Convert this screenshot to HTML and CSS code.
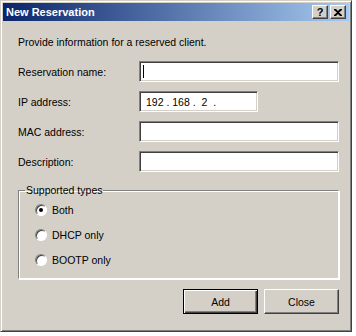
FILE: index.html
```html
<!DOCTYPE html>
<html lang="en">
<head>
    <meta charset="UTF-8">
    <title>New Reservation</title>
    <link rel="stylesheet" href="styles.css">
</head>
<body>
    <div class="window">
        <div class="titlebar">
            <span class="title">New Reservation</span>
            <div class="title-buttons">
                <span class="tbtn">?</span>
                <span class="tbtn">
                    <svg width="8" height="7" viewBox="0 0 8 7"><path d="M0 0h2l2 2 2-2h2v1L5 3.5 8 6v1H6L4 5 2 7H0V6l3-2.5L0 1z" fill="#000"/></svg>
                </span>
            </div>
        </div>
        <div class="content">
            <p class="intro">Provide information for a reserved client.</p>
            <div class="row">
                <label>Reservation name:</label>
                <div class="field wide"><span class="caret"></span></div>
            </div>
            <div class="row">
                <label>IP address:</label>
                <div class="field ip">192 . 168 .&nbsp;&nbsp;2&nbsp;&nbsp;.</div>
            </div>
            <div class="row">
                <label>MAC address:</label>
                <div class="field wide"></div>
            </div>
            <div class="row">
                <label>Description:</label>
                <div class="field wide"></div>
            </div>

            <fieldset class="group">
                <legend>Supported types</legend>
                <div class="radio"><span class="dot checked"></span>Both</div>
                <div class="radio"><span class="dot"></span>DHCP only</div>
                <div class="radio"><span class="dot"></span>BOOTP only</div>
            </fieldset>

            <div class="actions">
                <button class="btn default">Add</button>
                <button class="btn">Close</button>
            </div>
        </div>
    </div>
</body>
</html>
```

FILE: styles.css
```css
body {
    margin: 0;
    background: #ffffff;
    font-family: Tahoma, "Liberation Sans", Arial, sans-serif;
    font-size: 10.5px;
    color: #000;
}
.window {
    width: 352px;
    height: 332px;
    box-sizing: border-box;
    background: #d4d0c8;
    border: 1px solid;
    border-color: #d4d0c8 #404040 #404040 #d4d0c8;
    box-shadow: inset 1px 1px #ffffff, inset -1px -1px #808080;
    padding: 2px;
}
.titlebar {
    height: 18px;
    background: linear-gradient(to right, #0a246a, #a6caf0);
    display: flex;
    align-items: center;
    justify-content: space-between;
    padding: 0 3px 0 3px;
}
.title {
    color: #fff;
    font-weight: bold;
    font-size: 11px;
}
.title-buttons {
    display: flex;
    gap: 2px;
}
.tbtn {
    width: 16px;
    height: 14px;
    box-sizing: border-box;
    background: #d4d0c8;
    border: 1px solid;
    border-color: #fff #404040 #404040 #fff;
    box-shadow: inset -1px -1px #808080;
    display: flex;
    align-items: center;
    justify-content: center;
    font-weight: bold;
    font-size: 11px;
    line-height: 1;
}
.content {
    padding: 15px 8px 0 15px;
}
.intro {
    margin: 0 0 12px 0;
    line-height: 13px;
}
.row {
    display: flex;
    align-items: center;
    height: 21px;
    margin-bottom: 9px;
}
.row label {
    width: 121px;
    flex-shrink: 0;
}
.field {
    height: 21px;
    flex-shrink: 0;
    box-sizing: border-box;
    background: #fff;
    border: 1px solid;
    border-color: #808080 #fff #fff #808080;
    box-shadow: inset 1px 1px #404040, inset -1px -1px #d4d0c8;
    display: flex;
    align-items: center;
    padding-left: 4px;
}
.wide {
    width: 200px;
}
.ip {
    width: 119px;
    padding-left: 6px;
}
.caret {
    width: 1px;
    height: 13px;
    background: #000;
    margin-left: -1px;
}
.group {
    margin: 12px 0 0 0;
    width: 321px;
    height: 95px;
    box-sizing: border-box;
    border: 1px solid;
    border-color: #808080 #fff #fff #808080;
    box-shadow: inset 1px 1px #fff, 1px 1px #fff;
    padding: 6px 0 0 16px;
}
.group legend {
    padding: 0 1px;
    margin-left: -10px;
    line-height: 13px;
}
.radio {
    display: flex;
    align-items: center;
    height: 13px;
    margin-bottom: 12px;
}
.dot {
    width: 12px;
    height: 12px;
    box-sizing: border-box;
    border-radius: 50%;
    background: #fff;
    border: 1px solid;
    border-color: #808080 #fff #fff #808080;
    box-shadow: inset 1px 1px #404040;
    margin-right: 5px;
    position: relative;
}
.dot.checked::after {
    content: "";
    position: absolute;
    left: 3px;
    top: 3px;
    width: 4px;
    height: 4px;
    border-radius: 50%;
    background: #000;
}
.actions {
    display: flex;
    justify-content: flex-end;
    gap: 6px;
    margin-top: 10px;
    width: 321px;
}
.btn {
    width: 75px;
    height: 25px;
    box-sizing: border-box;
    background: #d4d0c8;
    border: 1px solid;
    border-color: #fff #404040 #404040 #fff;
    box-shadow: inset -1px -1px #808080;
    font-family: Tahoma, "Liberation Sans", Arial, sans-serif;
    font-size: 10.5px;
    padding: 0;
}
.btn.default {
    border: 1px solid #000;
    box-shadow: inset 1px 1px #fff, inset -1px -1px #404040, inset -2px -2px #808080;
}
```
